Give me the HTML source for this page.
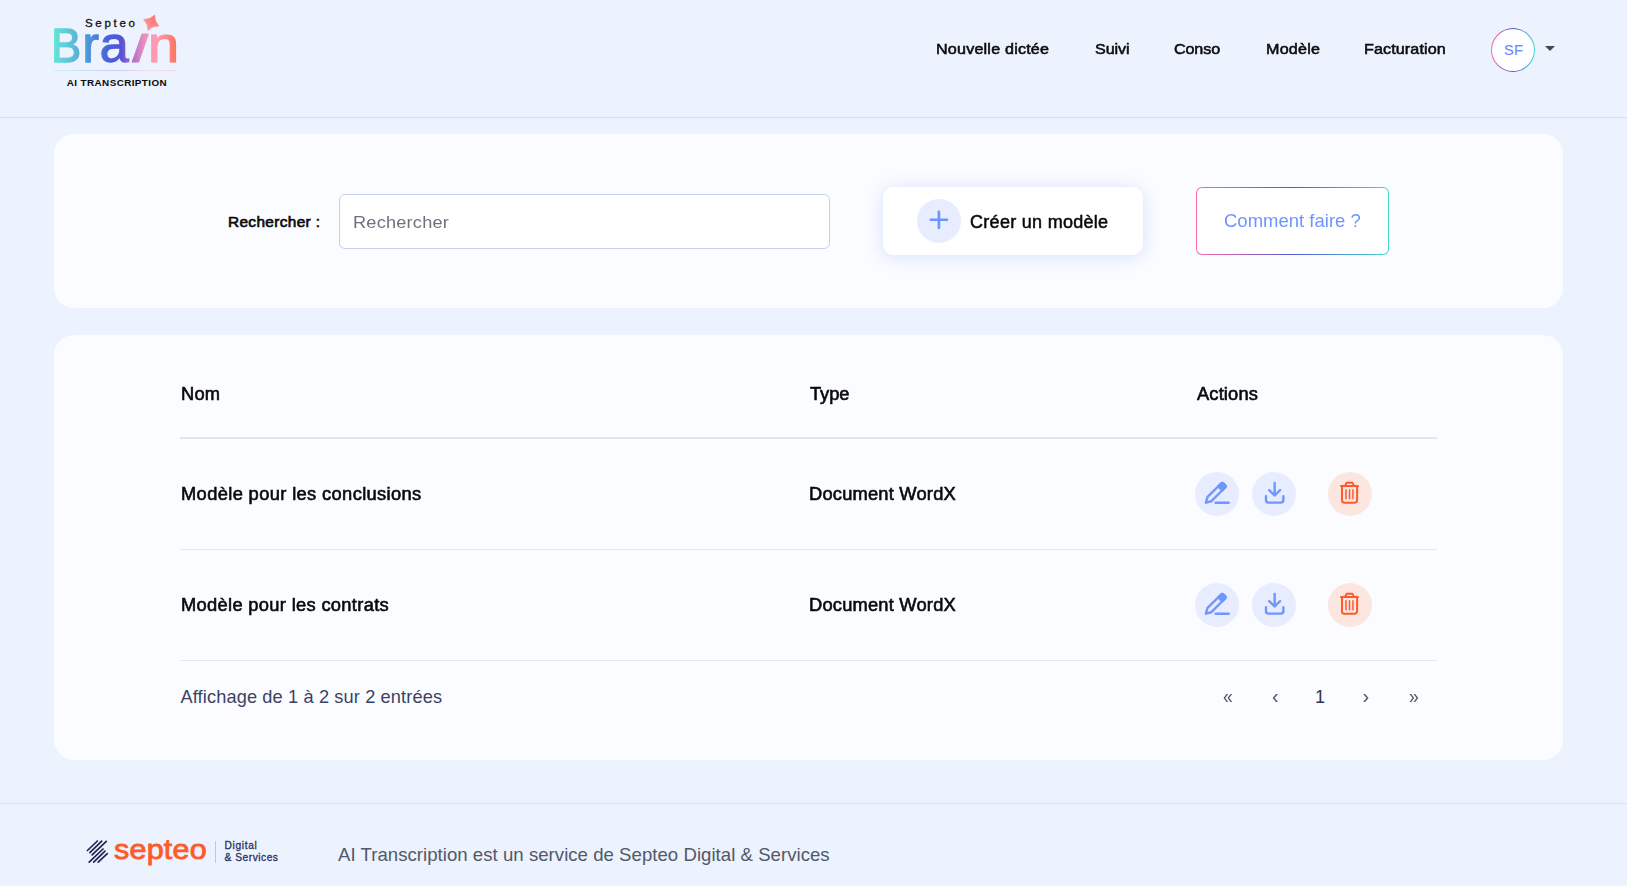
<!DOCTYPE html>
<html lang="fr">
<head>
<meta charset="utf-8">
<title>AI Transcription - Modèle</title>
<style>
*{box-sizing:border-box;margin:0;padding:0}
html,body{width:1627px;height:886px;overflow:hidden}
body{background:#ecf2fe;font-family:"Liberation Sans",sans-serif;color:#0a0a0a;position:relative}
.abs{position:absolute;white-space:nowrap;line-height:1}
.hline{position:absolute;left:0;width:1627px;height:1px;background:#dde1e7}
.card{position:absolute;left:54px;width:1509px;background:#fafcff;border-radius:20px}
.nav{font-size:15px;font-weight:400;color:#0b0b0b;-webkit-text-stroke:.55px #0b0b0b}
.th{font-size:17.5px;-webkit-text-stroke:.6px #0a0a0a}
.td{font-size:17.5px;-webkit-text-stroke:.6px #0a0a0a}
.rb{position:absolute;left:180px;width:1257px;height:1px;background:#e3e6f3}
.circ{position:absolute;width:44px;height:44px;border-radius:50%;background:#e7ecff}
.circ.red{background:#fde5e0}
.circ svg{position:absolute;left:0;top:0;width:44px;height:44px;overflow:visible}
.sx{transform:scaleX(1.045);transform-origin:0 50%}
.nav.sx{transform:scaleX(1.075)}
.pg{font-size:18px;color:#4a5568}
</style>
</head>
<body>
<!-- header -->
<svg id="logo" style="position:absolute;left:45px;top:8px;width:145px;height:87px;overflow:visible" viewBox="45 8 145 87" font-family="Liberation Sans, sans-serif">
<defs>
<linearGradient id="bg" gradientUnits="userSpaceOnUse" x1="54" y1="0" x2="176" y2="0">
<stop offset="0" stop-color="#64e4d9"/><stop offset=".2" stop-color="#58b2d8"/><stop offset=".3" stop-color="#4a8fd8"/><stop offset=".45" stop-color="#4a5fd8"/><stop offset=".55" stop-color="#5552d6"/><stop offset=".62" stop-color="#9a66cc"/><stop offset=".7" stop-color="#d583c4"/><stop offset=".78" stop-color="#fc98b8"/><stop offset=".85" stop-color="#ff9aae"/><stop offset="1" stop-color="#ff7462"/>
</linearGradient>
<linearGradient id="sg" gradientUnits="userSpaceOnUse" x1="-3" y1="8" x2="3" y2="-8"><stop offset="0" stop-color="#ff8fa6"/><stop offset=".5" stop-color="#ff8688"/><stop offset="1" stop-color="#ff6e5e"/></linearGradient>
<mask id="bm" maskUnits="userSpaceOnUse" x="45" y="8" width="145" height="87">
<g fill="#fff" stroke="#fff" font-size="100" stroke-linejoin="round">
<text transform="translate(50.94 62.35) scale(0.4528 0.4840)" stroke-width="2.78">B</text>
<text transform="translate(82.58 62.35) scale(0.4920 0.4962)" stroke-width="2.63">r</text>
<text transform="translate(99.84 62.26) scale(0.5198 0.5019)" stroke-width="2.54">a</text>
<text transform="translate(128.06 62.35) skewX(-19.3) scale(0.6712 0.5300)" stroke-width="2.16">i</text>
<text transform="translate(147.95 62.35) scale(0.5579 0.4962)" stroke-width="2.47">n</text>
</g>
<rect x="138" y="8" width="30" height="25.2" fill="#000"/>
</mask>
</defs>
<text id="lg1" x="85" y="26.7" font-size="11.5" letter-spacing="2.7" fill="#111" stroke="#111" stroke-width=".3">Septeo</text>
<rect x="50" y="20" width="135" height="50" fill="url(#bg)" mask="url(#bm)"/>
<path id="star" transform="translate(151.3 22.75) rotate(23.5)" d="M0-8.4Q2.4-2.4 8.4 0Q2.4 2.4 0 8.4Q-2.4 2.4-8.4 0Q-2.4-2.4 0-8.4Z" fill="url(#sg)" stroke="url(#sg)" stroke-width=".5" stroke-linejoin="round"/>
<rect x="54" y="70" width="122" height="1" fill="url(#bg)" opacity=".22"/>
<text id="lg2" x="66.8" y="85.9" font-size="9.9" font-weight="700" letter-spacing=".4" fill="#0b0b0b">AI TRANSCRIPTION</text>
</svg>
<div class="abs nav sx" id="n1" style="letter-spacing:0.18px;left:936.4px;top:41px">Nouvelle dictée</div>
<div class="abs nav sx" id="n2" style="letter-spacing:-0.10px;left:1094.5px;top:41px">Suivi</div>
<div class="abs nav sx" id="n3" style="letter-spacing:-0.12px;left:1174px;top:41px">Conso</div>
<div class="abs nav sx" id="n4" style="letter-spacing:0.20px;left:1266px;top:41px">Modèle</div>
<div class="abs nav sx" id="n5" style="letter-spacing:0.10px;left:1364.4px;top:41px">Facturation</div>
<div id="avatar" style="position:absolute;left:1491px;top:27.5px;width:44px;height:44px;border-radius:50%;background:linear-gradient(90deg,#ff6b9d 0%,#5458d6 50%,#45d9d2 100%)"><div style="position:absolute;left:1px;top:1px;right:1px;bottom:1px;border-radius:50%;background:#fff"></div></div>
<div class="abs" id="sf" style="letter-spacing:0.30px;left:1504px;top:43px;font-size:14.6px;color:#6e8dfb;-webkit-text-stroke:.2px #6e8dfb">SF</div>
<div style="position:absolute;left:1545px;top:46px;width:0;height:0;border-left:5px solid transparent;border-right:5px solid transparent;border-top:5px solid #484848"></div>
<div class="hline" style="top:117px"></div>

<!-- search card -->
<div class="card" style="top:134px;height:174px"></div>
<div class="abs" id="lbl" style="left:228px;top:214px;font-size:15.4px;letter-spacing:.35px;-webkit-text-stroke:.65px #0a0a0a">Rechercher :</div>
<div id="inp" style="position:absolute;left:339px;top:194px;width:491px;height:55px;border:1px solid #c8cfee;border-radius:6px;background:#fff"></div>
<div class="abs sx" id="ph" style="letter-spacing:0.20px;left:353px;top:214px;font-size:17.4px;color:#6c727c">Rechercher</div>
<div id="btn1" style="position:absolute;left:883px;top:187px;width:260px;height:68px;border-radius:11px;background:#fff;box-shadow:0 2px 18px rgba(96,128,255,.22)"></div>
<div class="circ" style="left:917px;top:199px"><svg viewBox="0 0 44 44"><path d="M13.8 20.8H30M21.9 12.7V28.9" stroke="#6f93ff" stroke-width="2.6" stroke-linecap="round" fill="none"/></svg></div>
<div class="abs sx" id="b1t" style="letter-spacing:0.27px;left:970px;top:214px;font-size:17.5px;transform:scaleX(1.03);-webkit-text-stroke:.5px #0a0a0a">Créer un modèle</div>
<div id="btn2" style="position:absolute;left:1196px;top:187px;width:193px;height:68px;border-radius:6px;background:linear-gradient(90deg,#ff6b9d 0%,#5458d6 50%,#45d9d2 100%)"><div style="position:absolute;left:1px;top:1px;right:1px;bottom:1px;border-radius:5px;background:#fff"></div></div>
<div class="abs sx" id="b2t" style="letter-spacing:0.01px;left:1224px;top:213px;font-size:17.7px;color:#7094ff">Comment faire ?</div>

<!-- table card -->
<div class="card" style="top:335px;height:425px"></div>
<div class="abs th sx" id="h1" style="letter-spacing:0.20px;left:180.6px;top:386px">Nom</div>
<div class="abs th sx" id="h2" style="letter-spacing:-0.05px;left:810px;top:386px">Type</div>
<div class="abs th sx" id="h3" style="letter-spacing:0.14px;left:1196.5px;top:386px">Actions</div>
<div class="rb" style="top:437px;height:2px;background:#e1e5f3"></div>
<div class="abs td sx" id="r1a" style="letter-spacing:0.35px;left:180.6px;top:486px">Modèle pour les conclusions</div>
<div class="abs td sx" id="r1b" style="letter-spacing:0.20px;left:809px;top:486px">Document WordX</div>
<div class="rb" style="top:549px"></div>
<div class="abs td sx" id="r2a" style="letter-spacing:0.31px;left:180.6px;top:597px">Modèle pour les contrats</div>
<div class="abs td sx" id="r2b" style="letter-spacing:0.20px;left:809px;top:597px">Document WordX</div>
<div class="rb" style="top:660px"></div>
<div class="abs" id="info" style="letter-spacing:0.13px;left:180.5px;top:688px;font-size:18.2px;color:#3a4263">Affichage de 1 à 2 sur 2 entrées</div>
<div class="abs pg" id="p1" style="left:1222.5px;top:687px;font-size:19.5px;transform:scaleX(.9);transform-origin:0 50%">«</div>
<div class="abs pg" id="p2" style="left:1272px;top:687px;font-size:19.5px">‹</div>
<div class="abs pg" id="p3" style="left:1315px;top:688px;color:#2d3550">1</div>
<div class="abs pg" id="p4" style="left:1362.5px;top:687px;font-size:19.5px">›</div>
<div class="abs pg" id="p5" style="left:1408.8px;top:687px;font-size:19.5px;transform:scaleX(.9);transform-origin:0 50%">»</div>


<!-- action icons -->
<div class="circ" style="left:1195px;top:472px"><svg viewBox="0 0 44 44"><use href="#ic-edit"/></svg></div>
<div class="circ" style="left:1252px;top:472px"><svg viewBox="0 0 44 44"><use href="#ic-dl"/></svg></div>
<div class="circ red" style="left:1328px;top:472px"><svg viewBox="0 0 44 44"><use href="#ic-del"/></svg></div>
<div class="circ" style="left:1195px;top:583px"><svg viewBox="0 0 44 44"><use href="#ic-edit"/></svg></div>
<div class="circ" style="left:1252px;top:583px"><svg viewBox="0 0 44 44"><use href="#ic-dl"/></svg></div>
<div class="circ red" style="left:1328px;top:583px"><svg viewBox="0 0 44 44"><use href="#ic-del"/></svg></div>
<svg width="0" height="0" style="position:absolute"><defs>
<g id="ic-edit" fill="none" stroke="#7096ff" stroke-width="2.4" stroke-linecap="round" stroke-linejoin="round">
<path d="M20.6 30.75H33.7"/>
<g transform="translate(10 31.6) rotate(-45)"><path d="M1.3 0L6.2-2.83H25.6Q27.2-2.83 27.2-1.2V1.2Q27.2 2.83 25.6 2.83H6.2Z"/><path d="M21.6-2.83H25.6Q27.2-2.83 27.2-1.2V1.2Q27.2 2.83 25.6 2.83H21.6Z" fill="#7096ff"/></g>
</g>
<g id="ic-dl" fill="none" stroke="#7096ff" stroke-width="2.4" stroke-linecap="round" stroke-linejoin="round">
<path d="M22.65 11V23.4M17.2 18.2L22.65 23.5L28.1 18.2M14 24.2V28A2.6 2.6 0 0 0 16.6 30.6H28.8A2.6 2.6 0 0 0 31.4 28V24.2"/>
</g>
<g id="ic-del" fill="none" stroke="#ff5a2b" stroke-linecap="round" stroke-linejoin="round">
<path d="M12.9 13.95H30M17 13.9L18.6 10.8H24.4L26 13.9" stroke-width="1.9"/>
<path d="M14 14.2V28.2A2.6 2.6 0 0 0 16.6 30.8H26.5A2.6 2.6 0 0 0 29.1 28.2V14.2" stroke-width="2"/>
<path d="M18 17.8V26.8M21.5 17.8V26.8M24.95 17.8V26.8" stroke-width="1.5"/>
</g>
</defs></svg>
<!-- footer -->
<div class="hline" style="top:803px"></div>
<svg id="flogo" style="position:absolute;left:80px;top:832px;width:210px;height:44px;overflow:visible" viewBox="80 832 210 44" font-family="Liberation Sans, sans-serif">
<g stroke="#1f2650" stroke-width="1.7" stroke-linecap="round">
<path d="M87.4 850.5L97.4 841M89.9 852.7L101.7 841.2M92.1 854.8L106.3 841.3M89.2 862.2L103 849M93.7 862.2L105 851.2M98.2 862.2L107.3 853.6"/>
</g>
<text id="fl1" transform="translate(114.1 858.5) scale(1.1 1)" font-size="27.7" letter-spacing=".2" fill="#ff5a28" stroke="#ff5a28" stroke-width=".8">septeo</text>
<rect x="215" y="841" width="1" height="22" fill="#c3c8d8"/>
<text id="fl2" x="224.6" y="849" font-size="10.2" letter-spacing=".65" fill="#2b3160" stroke="#2b3160" stroke-width=".3">Digital</text>
<text id="fl3" x="224.6" y="861" font-size="10.2" letter-spacing=".52" fill="#2b3160" stroke="#2b3160" stroke-width=".3">&amp; Services</text>
</svg>
<div class="abs" id="ft" style="letter-spacing:0.03px;left:338px;top:846px;font-size:18.6px;color:#525868">AI Transcription est un service de Septeo Digital &amp; Services</div>
</body>
</html>
